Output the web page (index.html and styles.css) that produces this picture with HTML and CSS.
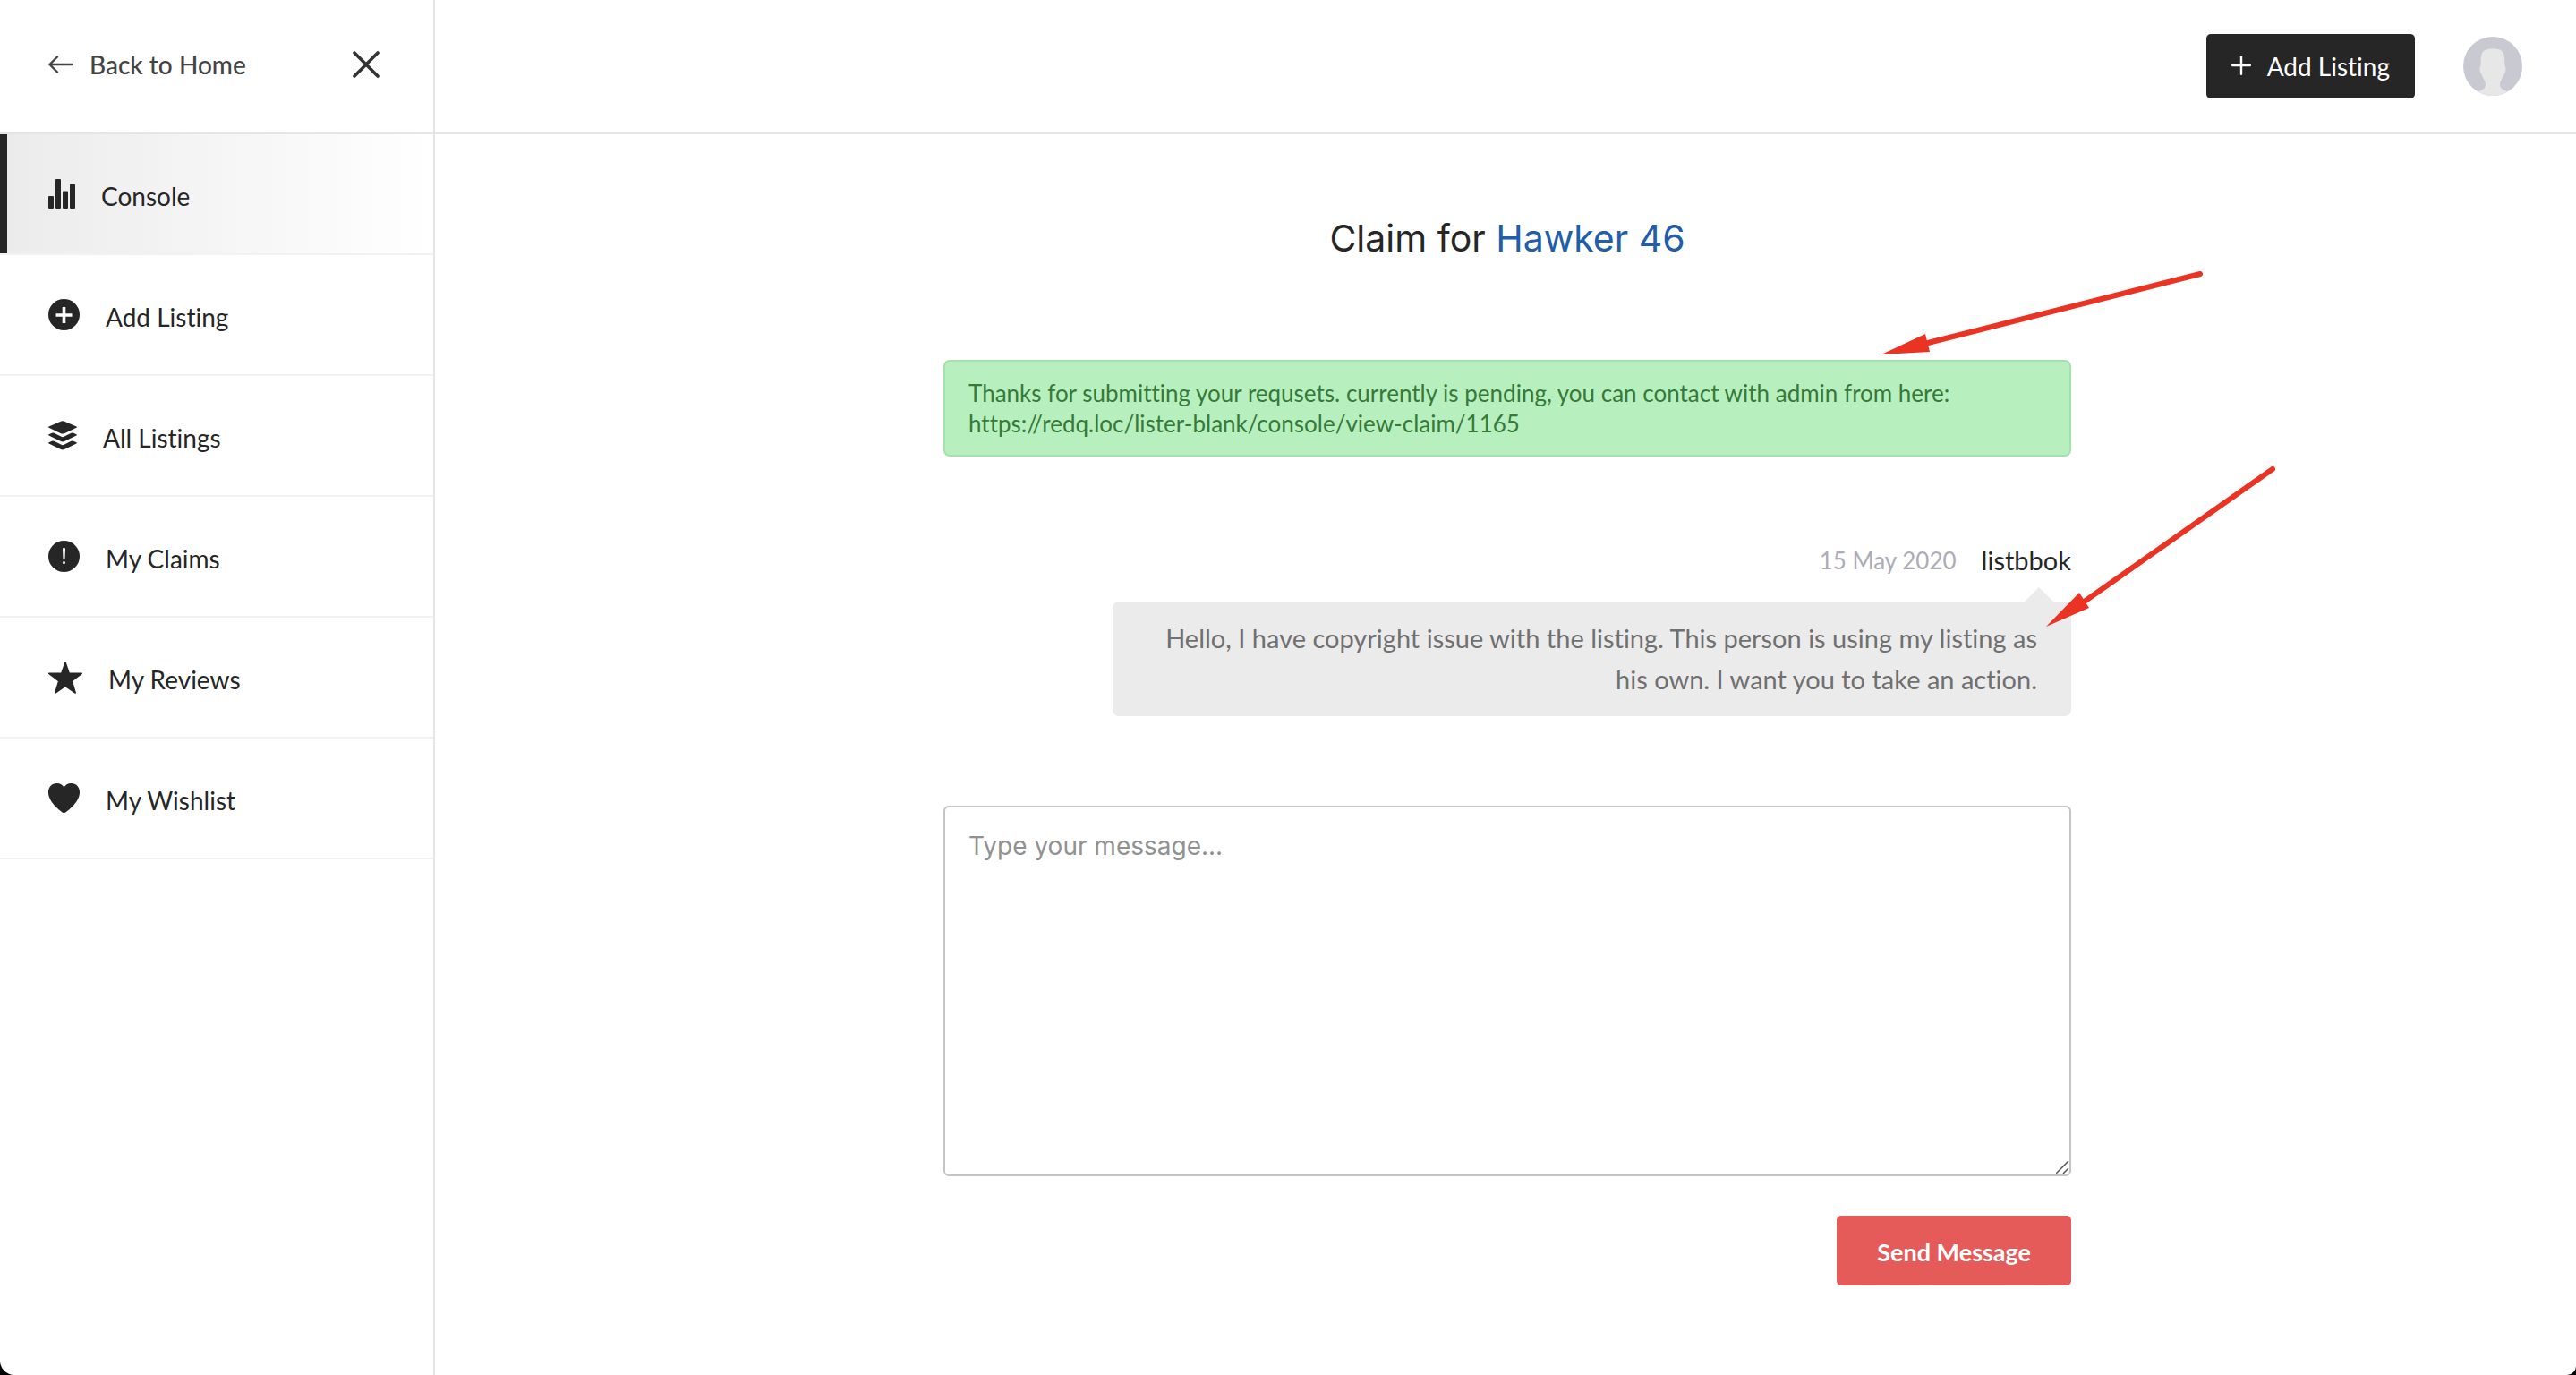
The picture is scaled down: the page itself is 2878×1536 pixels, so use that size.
FILE: index.html
```html
<!DOCTYPE html>
<html lang="en">
<head>
<meta charset="utf-8">
<title>Claim for Hawker 46</title>
<link rel="stylesheet" href="styles.css">
</head>
<body>
<div class="page">
  <aside class="sidebar">
    <div class="sidebar-head">
      <a class="back" href="#">
        <svg width="28" height="20" viewBox="0 0 28 20" fill="none" stroke="currentColor" stroke-width="2.4" stroke-linecap="round" stroke-linejoin="round"><path d="M27 10H1.5M10 1.500L1.500 10L10 18.500"/></svg>
        Back to Home
      </a>
      <button class="close" type="button" aria-label="Close menu">
        <svg width="30" height="30" viewBox="0 0 30 30" fill="none" stroke="currentColor" stroke-width="3.600" stroke-linecap="round"><path d="M2 2L28 28M28 2L2 28"/></svg>
      </button>
    </div>
    <nav class="menu">
      <a class="menu-item active" href="#">
        <svg width="30" height="34" viewBox="0 0 30 34" fill="currentColor"><rect x="0" y="19" width="6" height="14" rx="1"/><rect x="8" y="0" width="6" height="33" rx="1"/><rect x="16" y="13.500" width="6" height="19.500" rx="1"/><rect x="24" y="5.500" width="6" height="27.500" rx="1"/></svg>
        <span class="menu-label">Console</span>
      </a>
      <a class="menu-item" href="#">
        <svg width="35" height="35" viewBox="0 0 35 35"><circle cx="17.500" cy="17.500" r="17.500" fill="currentColor"/><path d="M17.500 9v18M8.500 18h18" stroke="#fff" stroke-width="3.600"/></svg>
        <span class="menu-label">Add Listing</span>
      </a>
      <a class="menu-item" href="#">
        <svg width="32" height="33" viewBox="0 0 32 33" fill="currentColor"><path d="M14.500 .6q1.500-.6 3 0L31.400 6.600q1 .6 0 1.200L18.500 14q-2.500 1-5 0L.6 7.800q-1-.6 0-1.200z"/><path d="M.6 15.200L4 13.800q1.200-.5 2.500 0L14.500 17.800q1.500.7 3 0L25.500 13.800q1.300-.5 2.500 0L31.400 15.200q1 .6 0 1.300L18 23q-2 .8-4 0L.6 16.500q-1-.7 0-1.300z"/><path d="M.6 24.200L4 22.800q1.200-.5 2.500 0L14.500 26.800q1.500.7 3 0L25.500 22.800q1.300-.5 2.500 0L31.400 24.200q1 .6 0 1.300L18 32q-2 .8-4 0L.6 25.500q-1-.7 0-1.300z"/></svg>
        <span class="menu-label">All Listings</span>
      </a>
      <a class="menu-item" href="#">
        <svg width="35" height="35" viewBox="0 0 35 35"><circle cx="17.500" cy="17.500" r="17.500" fill="currentColor"/><path d="M16 8.500q1.500-1.200 3 0L18.500 21h-2z" fill="#fff"/><circle cx="17.500" cy="24.500" r="1.500" fill="#fff"/></svg>
        <span class="menu-label">My Claims</span>
      </a>
      <a class="menu-item" href="#">
        <svg width="38" height="36" viewBox="0 0 38 36" fill="currentColor" stroke="currentColor" stroke-width="1.600" stroke-linejoin="round"><path d="M19 1L23.200 13.300L37.200 13.300L26.200 21.800L30.200 35L19 27.300L7.800 35L11.800 21.800L.8 13.300L14.800 13.300z"/></svg>
        <span class="menu-label">My Reviews</span>
      </a>
      <a class="menu-item" href="#">
        <svg width="35" height="34" viewBox="0 0 35 34" fill="currentColor"><path d="M17.500 33.500C16 33 0 22 0 10C0 4 4 0 9.500 0C13.500 0 16 2 17.500 4.500C19 2 21.500 0 25.500 0C31 0 35 4 35 10C35 22 19 33 17.500 33.500z"/></svg>
        <span class="menu-label">My Wishlist</span>
      </a>
    </nav>
  </aside>

  <div class="main">
    <header class="topbar">
      <button class="add-button" type="button">
        <svg width="22" height="22" viewBox="0 0 22 22" fill="none" stroke="currentColor" stroke-width="2.400" stroke-linecap="round"><path d="M11 .2v19.600M1.200 10h19.600"/></svg>
        Add Listing
      </button>
      <a class="avatar" href="#" aria-label="Profile">
        <svg width="66" height="66" viewBox="0 0 66 66"><circle cx="33" cy="33" r="33" fill="#c9c9d1"/><path d="M16.500 61.500C21 59 25 58.500 25 53C25 49 21.500 46 20 41C18 40 18.200 33 19.700 32C19.500 19 20 13.500 33 13.500C46 13.500 46.500 19 46.300 32C47.800 33 48 40 46 41C44.500 46 41 49 41 53C41 58.500 45 59 49.500 61.500A33 33 0 0 1 16.500 61.500z" fill="#e7e7e8"/></svg>
      </a>
    </header>

    <main class="content">
      <section class="claim">
        <h1 class="title">Claim for <a href="#">Hawker 46</a></h1>
        <p class="notice">Thanks for submitting your requsets. currently is pending, you can contact with admin from here: https://redq.loc/lister-blank/console/view-claim/1165</p>
        <article class="message">
          <div class="meta"><time datetime="2020-05-15">15 May 2020</time><span class="author">listbbok</span></div>
          <p class="bubble">Hello, I have copyright issue with the listing. This person is using my listing as his own. I want you to take an action.</p>
        </article>
        <form class="reply">
          <textarea class="reply-text" aria-label="Message" placeholder="Type your message..."></textarea>
          <button class="send" type="button">Send Message</button>
        </form>
        <svg class="arrows" width="500" height="410" viewBox="0 0 500 410" aria-hidden="true">
          <g stroke="#eb3323" stroke-width="6" stroke-linecap="round"><path d="M404 6L100 83M485 224L276 371"/></g>
          <g fill="#eb3323"><path d="M48 96L97 73L102 93z"/><path d="M232 400L269 362L280 379z"/></g>
        </svg>
      </section>
    </main>
  </div>
</div>
</body>
</html>
```
FILE: styles.css
```css
* { box-sizing: border-box; }

html { background: #000; }

body {
  margin: 0;
  font-family: Lato, "Open Sans", sans-serif;
  font-size: 28px;
  font-variant-ligatures: none;
  color: #262626;
}

button {
  border: 0;
  font: inherit;
  font-variant-ligatures: none;
  cursor: pointer;
}

a { color: inherit; text-decoration: none; }
svg { display: block; flex: none; }

.page {
  display: flex;
  min-height: 100vh;
  background: #fff;
  border-radius: 0 0 10px 16px;
}

.sidebar {
  flex: none;
  width: 486px;
  border-right: 2px solid #e5e5e5;
}

.sidebar-head,
.topbar {
  display: flex;
  align-items: center;
  height: 150px;
  border-bottom: 2px solid #e5e5e5;
}

.sidebar-head {
  justify-content: space-between;
  padding: 0 60px 4px 54px;
}

.back {
  display: flex;
  align-items: center;
  gap: 18px;
  color: #444;
  font-weight: 500;
}

.close {
  padding: 0;
  background: none;
  color: #333;
}

.menu-item {
  display: flex;
  align-items: center;
  gap: 29px;
  height: 135px;
  padding-left: 54px;
  border-bottom: 2px solid #f2f2f2;
}

.menu-item.active {
  background: linear-gradient(90deg, #ebebeb, #fff);
  box-shadow: inset 8px 0 #262626;
}

.menu-label { padding-top: 4px; }

.main { flex: 1; min-width: 0; }

.topbar {
  justify-content: flex-end;
  gap: 54px;
  padding-right: 60px;
}

.add-button {
  display: flex;
  align-items: center;
  gap: 18px;
  height: 72px;
  padding: 0 28px;
  border-radius: 5px;
  background: #262626;
  color: #fff;
}

.content {
  display: flex;
  justify-content: center;
  padding: 84px 0 100px 4px;
}

.claim {
  position: relative;
  width: 1260px;
}

.title {
  margin: 0 0 104px;
  font-family: Inter, sans-serif;
  font-size: 41px;
  line-height: 64px;
  font-weight: 400;
  text-align: center;
}

.title a { color: #215da8; }

.notice {
  margin: 0 0 98px;
  padding: 18px 26px;
  border: 2px solid #a3e3ab;
  border-radius: 7px;
  background: #b8efbf;
  color: #357a38;
  font-size: 26px;
  line-height: 34px;
}

.message {
  display: flex;
  flex-direction: column;
  align-items: flex-end;
  gap: 28px;
  margin-bottom: 100px;
}

.meta {
  display: flex;
  align-items: center;
  gap: 28px;
  line-height: 36px;
}

.meta time { color: #acacb6; font-size: 26px; }
.author { font-size: 29px; }

.bubble {
  position: relative;
  width: 85%;
  margin: 0;
  padding: 18px 38px;
  border-radius: 7px;
  background: #ebebeb;
  color: #707070;
  font-size: 29px;
  line-height: 46px;
  text-align: right;
}

.bubble::before {
  content: "";
  position: absolute;
  right: 20px;
  bottom: 100%;
  border: 16px solid transparent;
  border-top: 0;
  border-bottom-color: #ebebeb;
}

.reply {
  display: flex;
  flex-direction: column;
  align-items: flex-end;
  gap: 44px;
}

.reply-text {
  width: 100%;
  height: 414px;
  padding: 26px;
  border: 2px solid #c4c4c4;
  border-radius: 6px;
  background: #fff;
  font-family: Inter, sans-serif;
  font-size: 28px;
  line-height: 34px;
  resize: vertical;
}

.reply-text::placeholder { color: #919191; }

.reply-text::-webkit-resizer {
  background: url("data:image/svg+xml,%3Csvg xmlns='http://www.w3.org/2000/svg' viewBox='0 0 15 15'%3E%3Cpath d='M0 14L14 0M8 14L14 8' stroke='%23555' stroke-width='1.5'/%3E%3C/svg%3E") center / contain no-repeat;
}

.send {
  height: 78px;
  padding: 2px 45px 0;
  border-radius: 5px;
  background: #e55b5a;
  color: #fff;
  font-size: 27px;
  font-weight: 700;
}

/* Annotation arrows drawn over the conversation */
.arrows {
  position: absolute;
  top: 66px;
  right: -240px;
  pointer-events: none;
}
```
